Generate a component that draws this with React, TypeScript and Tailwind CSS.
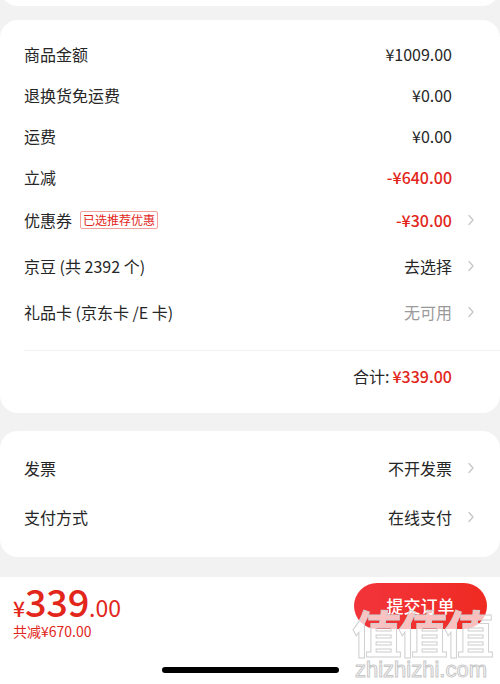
const font = { fontFamily: '"Noto Sans CJK SC", "Noto Sans", sans-serif' };

function Chevron() {
  return (
    <svg width="8" height="12" viewBox="0 0 8 12" fill="none">
      <path d="M2 1.5 L6 6 L2 10.5" stroke="#c4c4c4" strokeWidth="1.2" strokeLinecap="round" strokeLinejoin="round" />
    </svg>
  );
}

type Row = {
  label: string;
  tag?: string;
  value: string;
  tone?: "red" | "dark" | "gray";
  arrow?: boolean;
  h: string;
};

const priceRows: Row[] = [
  { label: "商品金额", value: "¥1009.00", h: "h-[41px]" },
  { label: "退换货免运费", value: "¥0.00", h: "h-[41px]" },
  { label: "运费", value: "¥0.00", h: "h-[41px]" },
  { label: "立减", value: "-¥640.00", tone: "red", h: "h-[41px]" },
  { label: "优惠券", tag: "已选推荐优惠", value: "-¥30.00", tone: "red", arrow: true, h: "h-[46px]" },
  { label: "京豆 (共 2392 个)", value: "去选择", arrow: true, h: "h-[46px]" },
  { label: "礼品卡 (京东卡 /E 卡)", value: "无可用", tone: "gray", arrow: true, h: "h-[46px]" },
];

const toneClass = {
  red: "text-[#e2261b] font-medium",
  dark: "text-[#262626]",
  gray: "text-[#9a9a9a]",
};

function LineItem({ row }: { row: Row }) {
  return (
    <div className={`flex items-center pl-6 ${row.h}`}>
      <div className="flex-1 flex items-center text-[16px] text-[#262626]">
        <span className="whitespace-pre">{row.label}</span>
        {row.tag && (
          <span className="ml-[8px] border border-[#f2a09a] text-[#e2261b] text-[12px] leading-[16px] px-[2px] rounded-[2px]">
            {row.tag}
          </span>
        )}
      </div>
      <span className={`text-[16px] ${toneClass[row.tone || "dark"]}`}>{row.value}</span>
      <div className="w-[48px] flex items-center pl-[15px]">{row.arrow && <Chevron />}</div>
    </div>
  );
}

export default function App() {
  return (
    <div className="w-[500px] h-[684px] bg-[#f2f2f2] flex flex-col overflow-hidden relative" style={font}>
      {/* bottom edge of the card above */}
      <div className="h-[24px] -mt-[18px] bg-white rounded-b-[18px] shrink-0" />

      <div className="mt-[14px] bg-white rounded-[18px] pt-[13px] pb-[12px] shrink-0">
        {priceRows.map((r) => (
          <LineItem key={r.label} row={r} />
        ))}
        <div className="ml-6 mt-[15px] border-t border-[#f1f1f1]" />
        <div className="h-[50px] flex items-center justify-end pr-[48px] text-[16px]">
          <span className="text-[#262626]">合计:</span>
          <span className="ml-[3px] text-[#e2261b] font-medium">¥339.00</span>
        </div>
      </div>

      <div className="mt-[18px] bg-white rounded-[18px] pt-[12px] pb-[16px] shrink-0">
        <LineItem row={{ label: "发票", value: "不开发票", arrow: true, h: "h-[49px]" }} />
        <LineItem row={{ label: "支付方式", value: "在线支付", arrow: true, h: "h-[49px]" }} />
      </div>

      <div className="mt-[20px] flex-1 bg-white flex flex-col">
        <div className="flex items-start justify-between pl-[13px] pr-[13px] pt-[4px]">
          <div className="flex flex-col text-[#e2261b]">
            <div className="flex items-baseline h-[40px] leading-[40px]">
              <span className="text-[21px] font-medium">¥</span>
              <span className="text-[38px] font-medium tracking-[-0.3px]">339</span>
              <span className="text-[23px]">.00</span>
            </div>
            <span className="text-[14px] leading-[20px]">共减¥670.00</span>
          </div>
          <button className="mt-[2px] w-[133px] h-[46px] rounded-full bg-gradient-to-r from-[#f2343a] to-[#ef2a22] text-white text-[17px] font-medium">
            提交订单
          </button>
        </div>
        <div className="flex-1" />
        <div className="flex justify-center pb-[11px]">
          <div className="w-[177px] h-[6px] rounded-full bg-black" />
        </div>
      </div>

      {/* watermark */}
      <div className="absolute left-[350px] top-[604px] w-[142px] flex flex-col items-center pointer-events-none">
        <span className="text-[50px] leading-[54px] font-bold tracking-[-4px] text-white/70 [-webkit-text-stroke:1px_#d0d0d0]">
          值值值
        </span>
        <span className="text-[22px] leading-[24px] text-white/80 [-webkit-text-stroke:1px_#c8c8c8]" style={{ fontFamily: '"Liberation Sans", sans-serif' }}>
          zhizhizhi.com
        </span>
      </div>
    </div>
  );
}
